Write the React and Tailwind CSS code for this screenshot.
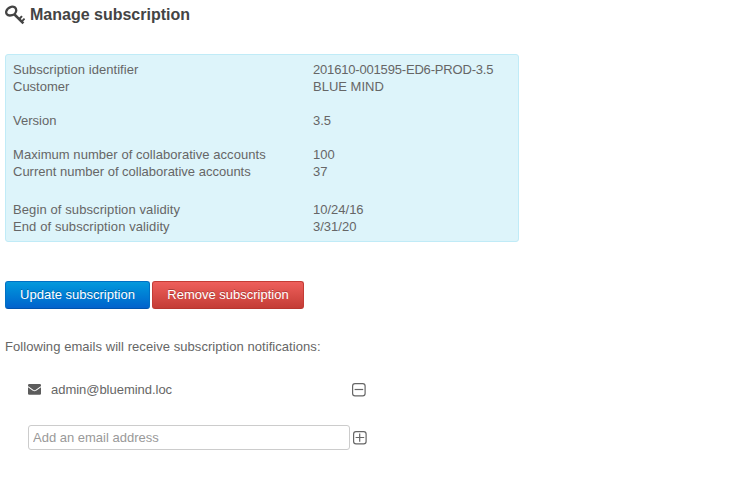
import React from "react";

const groups = [
  {
    rows: [
      ["Subscription identifier", "201610-001595-ED6-PROD-3.5", "tracking-[0.045px]", "tracking-[-0.18px]"],
      ["Customer", "BLUE MIND", "", ""],
    ],
    gap: "",
  },
  { rows: [["Version", "3.5", "", ""]], gap: "mt-[17px]" },
  {
    rows: [
      ["Maximum number of collaborative accounts", "100", "tracking-[0.05px]", ""],
      ["Current number of collaborative accounts", "37", "", ""],
    ],
    gap: "mt-[17px]",
  },
  {
    rows: [
      ["Begin of subscription validity", "10/24/16", "tracking-[0.1px]", ""],
      ["End of subscription validity", "3/31/20", "tracking-[0.1px]", ""],
    ],
    gap: "mt-[21px]",
  },
];

function KeyIcon() {
  return (
    <svg width="20" height="20" viewBox="0 0 20 20" fill="none" stroke="#444" className="block shrink-0">
      <path d="M6 1.8 C8.6 0.9 11.6 2.6 11.2 5.9 C10.8 8.8 7.9 10.6 4.7 10.5 C2.1 10.4 0.9 8.6 1.2 6.6 C1.7 4.3 3.8 2.5 6 1.8 Z" strokeWidth="2.3" />
      <path d="M9 9 L18.4 18.4" strokeWidth="2.5" />
      <path d="M14 14.2 L17 11.1 M16.6 16.6 L19.6 13.6" strokeWidth="2" />
    </svg>
  );
}

function EnvelopeIcon() {
  return (
    <svg width="13" height="11" viewBox="0 0 13 11" className="block shrink-0">
      <rect width="13" height="10.8" rx="1.2" fill="#5c5c5c" />
      <path d="M0 2.6 L5.2 6.4 Q6.5 7.2 7.8 6.4 L13 2.6" fill="none" stroke="#fff" strokeWidth="1.1" />
    </svg>
  );
}

function SquareButton({ plus }) {
  return (
    <button type="button" aria-label={plus ? "Add" : "Remove"} className="block shrink-0">
      <svg width="14" height="14" viewBox="0 0 14 14" fill="none" stroke="#666" className="block">
        <rect x="0.6" y="0.6" width="12.5" height="12.3" rx="2.4" strokeWidth="1.2" />
        <path d={plus ? "M2.6 6.5 H11.2 M6.7 2.4 V10.8" : "M2.6 6.5 H11.2"} strokeWidth="1.2" />
      </svg>
    </button>
  );
}

export default function App() {
  return (
    <main className="h-[481px] w-[731px] overflow-hidden bg-white pl-[5px] pt-[5px] font-['Liberation_Sans',Arial,sans-serif] text-[13px] leading-[17px] text-[#666]">
      <header className="flex h-[20px] items-center gap-[5px]">
        <KeyIcon />
        <h1 className="text-[16px] font-bold leading-[20px] text-[#444]">Manage subscription</h1>
      </header>

      <section className="mt-[29px] h-[188px] w-[514px] rounded-[3px] border border-[#c0ebf7] bg-[#ddf4fa] px-[7px] pt-[6px]">
        {groups.map((group, i) => (
          <dl key={i} className={group.gap}>
            {group.rows.map(([label, value, labelTracking, valueTracking]) => (
              <div key={label} className="flex">
                <dt className={`w-[300px] ${labelTracking}`}>{label}</dt>
                <dd className={valueTracking}>{value}</dd>
              </div>
            ))}
          </dl>
        ))}
      </section>

      <div className="mt-[39px] flex gap-[2px] text-white">
        <button
          type="button"
          className="h-[28px] w-[145px] rounded-[3px] border border-[#0070c4] border-b-[#0053ad] bg-linear-to-b from-[#0699dc] to-[#0362cc] pb-[2px] [text-shadow:0_-1px_0_rgba(0,0,0,0.25)]"
        >
          Update subscription
        </button>
        <button
          type="button"
          className="h-[28px] w-[152px] rounded-[3px] border border-[#c43c35] border-b-[#b8362f] bg-linear-to-b from-[#ee5f5b] to-[#c43c35] pb-[2px] [text-shadow:0_-1px_0_rgba(0,0,0,0.25)]"
        >
          Remove subscription
        </button>
      </div>

      <p className="mt-[29px] tracking-[0.06px]">Following emails will receive subscription notifications:</p>

      <div className="ml-[23px] mt-[26px] flex h-[17px] items-center">
        <EnvelopeIcon />
        <span className="ml-[10px] w-[301px] tracking-[-0.03px]">admin@bluemind.loc</span>
        <SquareButton />
      </div>

      <div className="ml-[23px] mt-[27px] flex items-center gap-[3px]">
        <input
          type="text"
          placeholder="Add an email address"
          className="h-[25px] w-[322px] rounded-[3px] border border-[#ccc] px-[4px] placeholder:text-[#999]"
        />
        <SquareButton plus />
      </div>
    </main>
  );
}
